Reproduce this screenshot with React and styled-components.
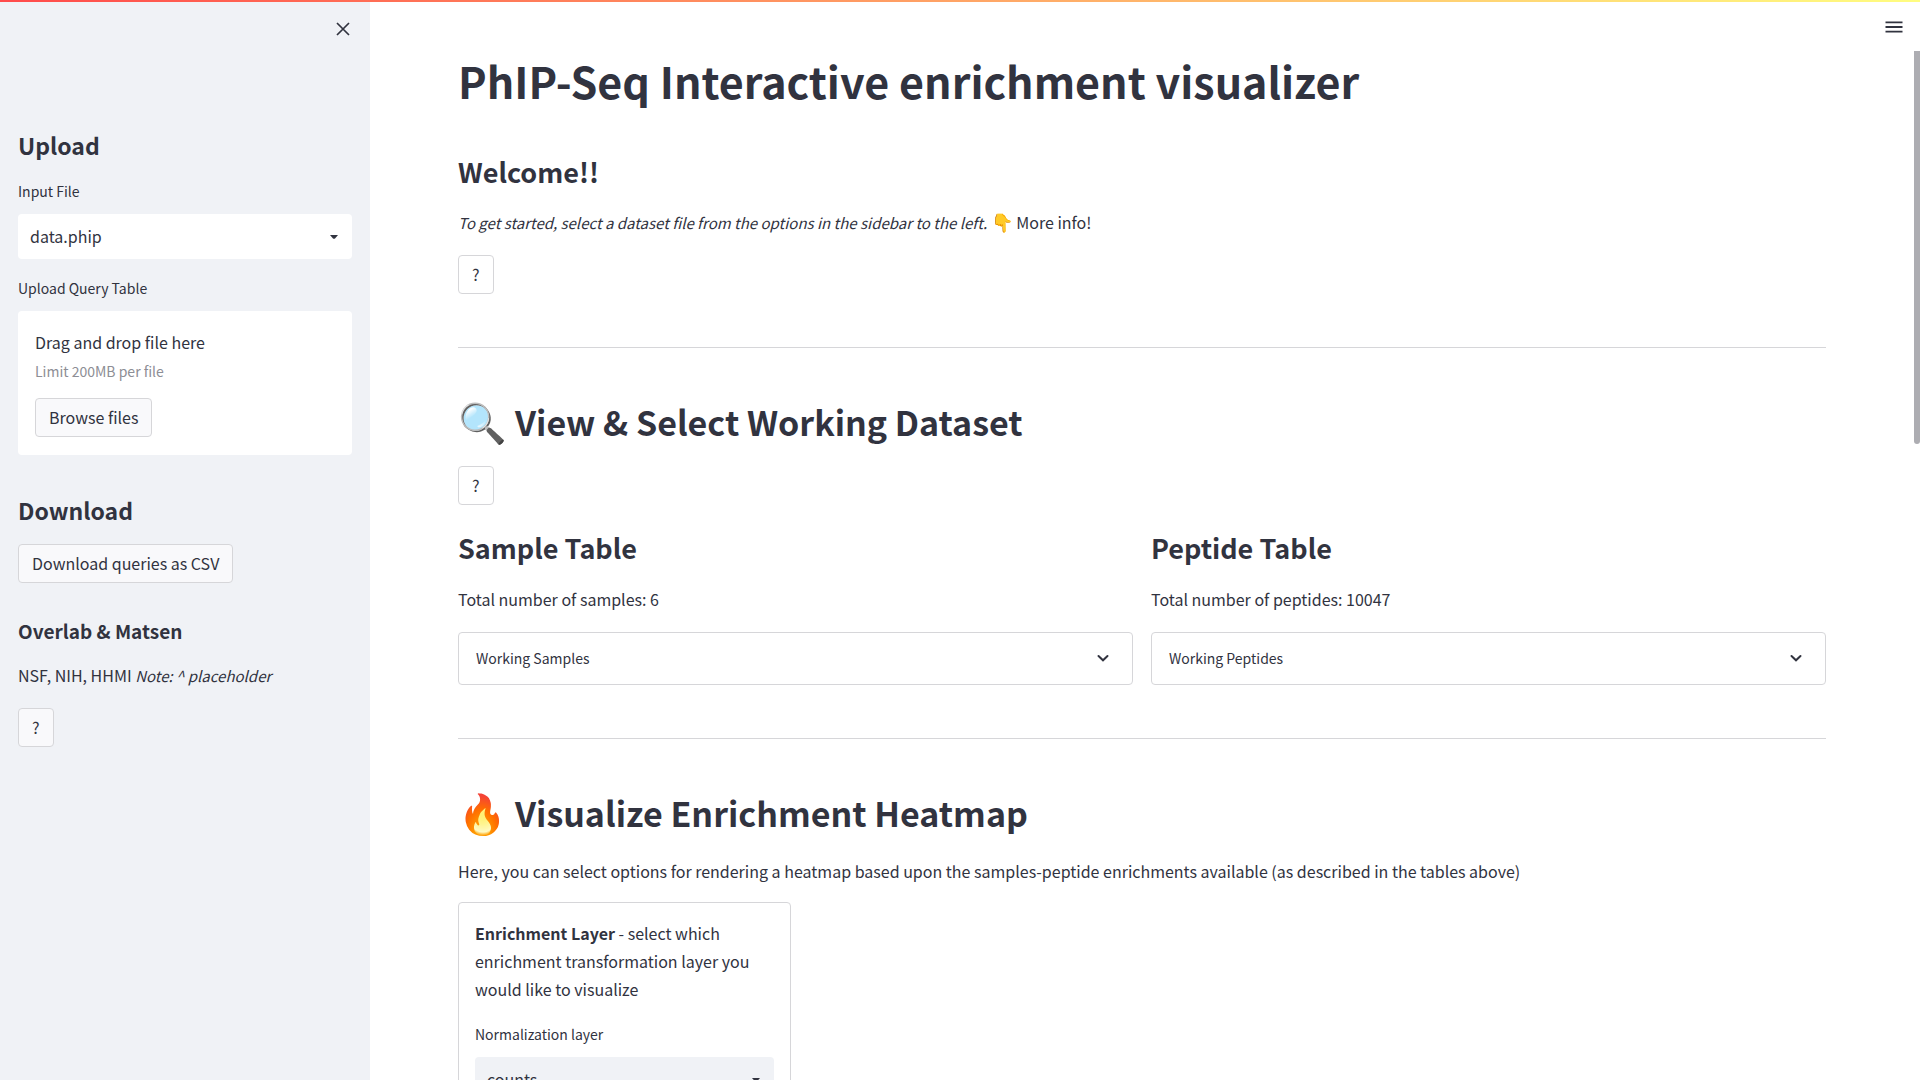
import React, { useId, useRef } from "react";
import styled, { createGlobalStyle } from "styled-components";

const ink = "#31333f";
const line = "#d6d6d9";
const panel = "#f0f2f6";

const GlobalStyle = createGlobalStyle`
  *, *::before, *::after { box-sizing: border-box; }
  body {
    margin: 0;
    background: #ffffff;
    color: ${ink};
    font-family: "Source Sans Pro", "Noto Sans CJK JP", "Noto Sans", sans-serif;
    font-size: 16px;
    line-height: 28px;
  }
  button, select, input { font: inherit; color: inherit; }
  em { font-size: 15px; line-height: 20px; }
`;

const Shell = styled.div`
  display: flex;
  height: 100vh;
  overflow: hidden;
`;

const Decoration = styled.div`
  position: fixed;
  top: 0;
  left: 0;
  right: 0;
  height: 2px;
  z-index: 3;
  background: linear-gradient(90deg, #ff4b4b, #fffd80);
`;

const Sidebar = styled.aside`
  flex: none;
  width: 370px;
  padding: 0 18px;
  background: ${panel};
`;

const SidebarTop = styled.div`
  display: flex;
  justify-content: flex-end;
  align-items: flex-start;
  height: 130px;
  padding-top: 20px;
`;

const IconButton = styled.button`
  display: grid;
  place-items: center;
  width: 18px;
  height: 18px;
  margin: 0;
  padding: 0;
  border: 0;
  background: none;
  cursor: pointer;
`;

const SideHeading = styled.h2`
  margin: ${(p) => (p.$spaced ? "40px 0 19px" : "0 0 21px")};
  font-size: 23px;
  line-height: 30px;
  font-weight: 600;
`;

const SideSubheading = styled.h3`
  margin: 36px 0 18px;
  font-size: 19px;
  line-height: 24px;
  font-weight: 600;
`;

const Field = styled.div`
  display: flex;
  flex-direction: column;
  gap: 13px;
  margin-bottom: 19px;
`;

const Label = styled.label`
  font-size: 14px;
  line-height: 20px;
`;

const SelectBox = styled.div`
  display: grid;
  align-items: center;
  border-radius: 4px;
  background: ${(p) => (p.$tinted ? panel : "#ffffff")};
  & > * { grid-area: 1 / 1; }
  & > svg { justify-self: end; margin-right: 13px; pointer-events: none; }
`;

const NativeSelect = styled.select`
  appearance: none;
  width: 100%;
  height: 45px;
  margin: 0;
  padding: 0 36px 2px 12px;
  border: 0;
  border-radius: 4px;
  background: transparent;
`;

const Dropzone = styled.div`
  padding: 17px 17px 18px;
  border-radius: 4px;
  background: #ffffff;
`;

const DropHint = styled.p`
  margin: 5px 0 17px;
  font-size: 14px;
  line-height: 20px;
  color: #8d8e95;
`;

const HiddenFile = styled.input`
  display: none;
`;

const Button = styled.button`
  display: block;
  height: 39px;
  margin: 0;
  padding: 0 13px 2px;
  border: 1px solid ${line};
  border-radius: 4px;
  background: ${(p) => (p.$tinted ? "#f9f9fb" : "#ffffff")};
  cursor: pointer;
`;

const Text = styled.p`
  margin: 0 0 ${(p) => p.$gap ?? 19}px;
`;

const Main = styled.main`
  position: relative;
  flex: 1;
  min-width: 0;
  overflow: hidden;
  padding: 54px 94px 0 88px;
`;

const MenuButton = styled(IconButton)`
  position: absolute;
  top: 18px;
  right: 17px;
`;

const ScrollThumb = styled.div`
  position: absolute;
  top: 51px;
  right: 0;
  width: 6px;
  height: 393px;
  border-radius: 0 0 3px 3px;
  background: #adadb2;
`;

const Title = styled.h1`
  margin: 0 0 49px;
  font-size: 43px;
  line-height: 52px;
  font-weight: 700;
`;

const SectionTitle = styled.h2`
  display: flex;
  align-items: center;
  gap: 8px;
  margin: 0 0 22px;
  font-size: 34px;
  line-height: 44px;
  font-weight: 600;
`;

const TitleEmoji = styled.span`
  padding-bottom: 4px;
  font-size: 39px;
  line-height: 40px;
`;

const InlineEmoji = styled.span`
  font-size: 18px;
  line-height: 20px;
`;

const Subtitle = styled.h3`
  margin: 0 0 ${(p) => p.$gap ?? 19}px;
  font-size: 27px;
  line-height: 34px;
  font-weight: 600;
`;

const Rule = styled.hr`
  height: 1px;
  margin: 53px 0 52px;
  border: 0;
  background: ${line};
`;

const Columns = styled.div`
  display: grid;
  grid-template-columns: repeat(2, minmax(0, 1fr));
  gap: 18px;
  margin-top: 26px;
`;

const Expander = styled.details`
  border: 1px solid ${line};
  border-radius: 4px;
`;

const Summary = styled.summary`
  display: flex;
  align-items: center;
  justify-content: space-between;
  height: 51px;
  padding: 0 22px 2px 17px;
  font-size: 14px;
  list-style: none;
  cursor: pointer;
`;

const Card = styled.form`
  width: 333px;
  padding: 16px 16px 24px;
  border: 1px solid ${line};
  border-radius: 4px;
`;

const Caret = () => (
  <svg width="10" height="6" viewBox="0 0 10 6" aria-hidden="true">
    <path d="M1 1h8L6 4.4Q5 5.3 4 4.4Z" fill={ink} />
  </svg>
);

const Chevron = () => (
  <svg width="14" height="14" viewBox="0 0 14 14" aria-hidden="true">
    <path d="M2.5 5L7 9.3 11.5 5" fill="none" stroke={ink} strokeWidth="2" strokeLinecap="round" />
  </svg>
);

function SelectField({ label, value, tinted }) {
  const id = useId();
  return (
    <Field>
      <Label htmlFor={id}>{label}</Label>
      <SelectBox $tinted={tinted}>
        <NativeSelect id={id} defaultValue={value}>
          <option>{value}</option>
        </NativeSelect>
        <Caret />
      </SelectBox>
    </Field>
  );
}

function Uploader() {
  const id = useId();
  const file = useRef(null);
  return (
    <Field>
      <Label htmlFor={id}>Upload Query Table</Label>
      <Dropzone>
        <Text $gap={0}>Drag and drop file here</Text>
        <DropHint>Limit 200MB per file</DropHint>
        <HiddenFile id={id} ref={file} type="file" />
        <Button type="button" $tinted onClick={() => file.current.click()}>
          Browse files
        </Button>
      </Dropzone>
    </Field>
  );
}

function TableColumn({ title, total, summary }) {
  return (
    <section>
      <Subtitle $gap={20}>{title}</Subtitle>
      <Text>{total}</Text>
      <Expander>
        <Summary>
          {summary}
          <Chevron />
        </Summary>
      </Expander>
    </section>
  );
}

export default function App() {
  return (
    <>
      <GlobalStyle />
      <Decoration />
      <Shell>
        <Sidebar>
          <SidebarTop>
            <IconButton type="button" aria-label="Close sidebar">
              <svg width="14" height="14" viewBox="0 0 14 14" aria-hidden="true">
                <path d="M1 1l12 12M13 1L1 13" stroke={ink} strokeWidth="1.7" />
              </svg>
            </IconButton>
          </SidebarTop>
          <SideHeading>Upload</SideHeading>
          <SelectField label="Input File" value="data.phip" />
          <Uploader />
          <SideHeading $spaced>Download</SideHeading>
          <Button type="button" $tinted>Download queries as CSV</Button>
          <SideSubheading>Overlab &amp; Matsen</SideSubheading>
          <Text>
            NSF, NIH, HHMI <em>Note: ^ placeholder</em>
          </Text>
          <Button type="button" $tinted>?</Button>
        </Sidebar>
        <Main>
          <MenuButton type="button" aria-label="Main menu">
            <svg width="18" height="12" viewBox="0 0 18 12" aria-hidden="true">
              <path d="M0.5 1.3h17M0.5 6h17M0.5 10.7h17" stroke={ink} strokeWidth="1.8" />
            </svg>
          </MenuButton>
          <ScrollThumb />
          <Title>PhIP-Seq Interactive enrichment visualizer</Title>
          <Subtitle>Welcome!!</Subtitle>
          <Text>
            <em>To get started, select a dataset file from the options in the sidebar to the left.</em>{" "}
            <InlineEmoji>👇</InlineEmoji> More info!
          </Text>
          <Button type="button">?</Button>
          <Rule />
          <SectionTitle>
            <TitleEmoji>🔍</TitleEmoji>
            View &amp; Select Working Dataset
          </SectionTitle>
          <Button type="button">?</Button>
          <Columns>
            <TableColumn title="Sample Table" total="Total number of samples: 6" summary="Working Samples" />
            <TableColumn title="Peptide Table" total="Total number of peptides: 10047" summary="Working Peptides" />
          </Columns>
          <Rule />
          <SectionTitle>
            <TitleEmoji>🔥</TitleEmoji>
            Visualize Enrichment Heatmap
          </SectionTitle>
          <Text $gap={17}>
            Here, you can select options for rendering a heatmap based upon the samples-peptide enrichments available (as
            described in the tables above)
          </Text>
          <Card>
            <Text $gap={21}>
              <strong>Enrichment Layer</strong> - select which enrichment transformation layer you would like to visualize
            </Text>
            <SelectField label="Normalization layer" value="counts" tinted />
          </Card>
        </Main>
      </Shell>
    </>
  );
}
